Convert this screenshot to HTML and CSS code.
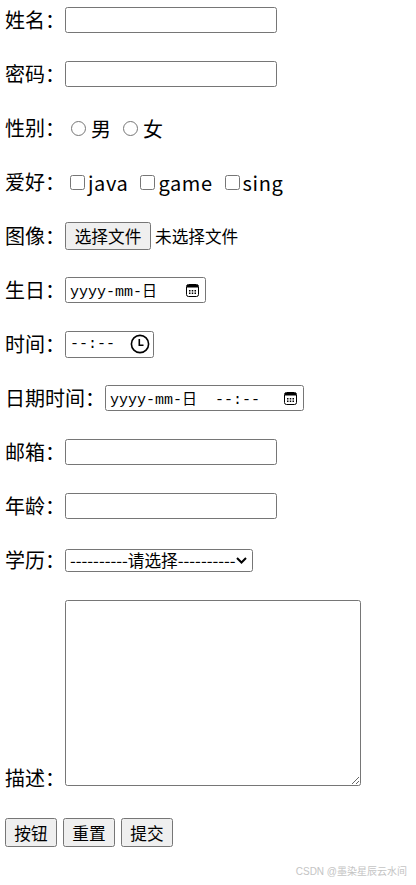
FILE: index.html
```html
<!DOCTYPE html>
<html lang="zh-CN">
<head>
    <meta charset="UTF-8">
    <meta name="viewport" content="width=device-width, initial-scale=1.0">
    <title>注册表单</title>
    <link rel="stylesheet" href="styles.css">
</head>
<body>
    <form class="reg-form">
        <div class="row">
            <span class="label">姓名：</span>
            <input type="text" class="text-input">
        </div>
        <div class="row">
            <span class="label">密码：</span>
            <input type="password" class="text-input">
        </div>
        <div class="row">
            <span class="label">性别：</span>
            <label class="option radio-opt"><input type="radio" name="sex">男</label>
            <label class="option radio-opt"><input type="radio" name="sex">女</label>
        </div>
        <div class="row">
            <span class="label">爱好：</span>
            <label class="option check-opt"><input type="checkbox">java</label>
            <label class="option check-opt"><input type="checkbox">game</label>
            <label class="option check-opt"><input type="checkbox">sing</label>
        </div>
        <div class="row">
            <span class="label">图像：</span>
            <button type="button" class="file-btn">选择文件</button>
            <span class="file-name">未选择文件</span>
        </div>
        <div class="row">
            <span class="label">生日：</span>
            <div class="fake-input date-box">
                <span class="mono">yyyy-mm-日</span>
                <svg class="cal-icon" width="13" height="13" viewBox="0 0 13 13">
                    <rect x="0.5" y="0.5" width="12" height="12" rx="2" fill="none" stroke="#000"/>
                    <rect x="1" y="1" width="11" height="2.5" fill="#000"/>
                    <rect x="3" y="6" width="1.5" height="1.5" fill="#000"/>
                    <rect x="5.75" y="6" width="1.5" height="1.5" fill="#000"/>
                    <rect x="8.5" y="6" width="1.5" height="1.5" fill="#000"/>
                    <rect x="3" y="8.5" width="1.5" height="1.5" fill="#000"/>
                    <rect x="5.75" y="8.5" width="1.5" height="1.5" fill="#000"/>
                    <rect x="8.5" y="8.5" width="1.5" height="1.5" fill="#000"/>
                </svg>
            </div>
        </div>
        <div class="row">
            <span class="label">时间：</span>
            <div class="fake-input time-box">
                <span class="mono">--:--</span>
                <svg width="20" height="20" viewBox="0 0 20 20">
                    <circle cx="10" cy="10" r="8.6" fill="none" stroke="#000" stroke-width="1.6"/>
                    <path d="M9.3 5v6.2h4.2" fill="none" stroke="#000" stroke-width="1.6"/>
                </svg>
            </div>
        </div>
        <div class="row">
            <span class="label">日期时间：</span>
            <div class="fake-input datetime-box">
                <span class="mono">yyyy-mm-日  --:--</span>
                <svg class="cal-icon" width="13" height="13" viewBox="0 0 13 13">
                    <rect x="0.5" y="0.5" width="12" height="12" rx="2" fill="none" stroke="#000"/>
                    <rect x="1" y="1" width="11" height="2.5" fill="#000"/>
                    <rect x="3" y="6" width="1.5" height="1.5" fill="#000"/>
                    <rect x="5.75" y="6" width="1.5" height="1.5" fill="#000"/>
                    <rect x="8.5" y="6" width="1.5" height="1.5" fill="#000"/>
                    <rect x="3" y="8.5" width="1.5" height="1.5" fill="#000"/>
                    <rect x="5.75" y="8.5" width="1.5" height="1.5" fill="#000"/>
                    <rect x="8.5" y="8.5" width="1.5" height="1.5" fill="#000"/>
                </svg>
            </div>
        </div>
        <div class="row">
            <span class="label">邮箱：</span>
            <input type="email" class="text-input">
        </div>
        <div class="row">
            <span class="label">年龄：</span>
            <input type="number" class="text-input">
        </div>
        <div class="row">
            <span class="label">学历：</span>
            <div class="select-box">
                <span class="select-text">----------请选择----------</span>
                <svg width="11" height="7" viewBox="0 0 11 7">
                    <path d="M1 1l4.5 4.5L10 1" fill="none" stroke="#000" stroke-width="2"/>
                </svg>
            </div>
        </div>
        <div class="desc-row">描述：<textarea class="desc"></textarea></div>
        <div class="btn-row">
            <button type="button" class="btn">按钮</button>
            <button type="reset" class="btn">重置</button>
            <button type="submit" class="btn">提交</button>
        </div>
    </form>

    <div class="watermark">CSDN @墨染星辰云水间</div>
</body>
</html>
```

FILE: styles.css
```css
/* page */
body {
    margin: 0 5px;
    font-family: "Noto Sans CJK SC", "Noto Sans", sans-serif;
    font-size: 20px;
    color: #000;
    background: #fff;
}

.reg-form {
    display: flex;
    flex-direction: column;
    gap: 26px;
    padding-top: 6px;
}

.row {
    display: flex;
    align-items: center;
    height: 28px;
}

.label {
    position: relative;
    top: -1px;
}

/* text fields */
.text-input {
    width: 212px;
    height: 26px;
    box-sizing: border-box;
    margin: 0;
    padding: 1px 2px;
    border: 1px solid #767676;
    border-radius: 2.5px;
    font-size: 16.67px;
}

/* radio + checkbox */
.option {
    display: flex;
    align-items: center;
    margin-right: 6px;
}

.radio-opt input {
    width: 15px;
    height: 15px;
    margin: 0 5px 0 6px;
}

.check-opt {
    margin-right: 7px;
    letter-spacing: 0.6px;
}

.check-opt input {
    width: 15px;
    height: 15px;
    margin: 0 3px 0 5px;
}

/* file picker */
.file-btn {
    width: 86px;
    height: 28px;
    padding: 0;
    margin: 0;
    background: #efefef;
    border: 1px solid #767676;
    border-radius: 2.5px;
    font-family: inherit;
    font-size: 16.67px;
    color: #000;
}

.file-name {
    margin-left: 4px;
    font-size: 16.67px;
}

/* date / time */
.fake-input {
    display: flex;
    align-items: center;
    justify-content: space-between;
    box-sizing: border-box;
    height: 26px;
    padding: 0 5px 0 4px;
    border: 1px solid #767676;
    border-radius: 2.5px;
}

.mono {
    font-family: "Liberation Mono", "Noto Sans CJK SC", monospace;
    font-size: 15px;
    white-space: pre;
}

.date-box {
    width: 141px;
}

.cal-icon {
    margin-right: 1px;
}

.time-box {
    width: 89px;
    height: 27px;
    padding-right: 3px;
}

.datetime-box {
    width: 199px;
}

/* select */
.select-box {
    display: flex;
    align-items: center;
    justify-content: space-between;
    box-sizing: border-box;
    width: 188px;
    height: 23px;
    padding: 0 5px 0 4px;
    border: 1px solid #767676;
    border-radius: 2.5px;
    font-size: 16.67px;
}

/* description */
.desc-row {
    line-height: normal;
}

.desc {
    width: 296px;
    height: 186px;
    box-sizing: border-box;
    margin: 0;
    border: 1px solid #767676;
    border-radius: 2.5px;
    vertical-align: baseline;
    resize: both;
}

/* buttons */
.btn-row {
    display: flex;
    gap: 6px;
}

.btn {
    width: 52px;
    height: 29px;
    padding: 0;
    margin: 0;
    background: #efefef;
    border: 1px solid #767676;
    border-radius: 2.5px;
    font-family: inherit;
    font-size: 16.67px;
    color: #000;
}

.watermark {
    margin-top: 16px;
    padding-right: 4px;
    text-align: right;
    font-family: "Liberation Sans", "Noto Sans CJK SC", sans-serif;
    font-size: 10px;
    color: #c4c4c4;
}
```
